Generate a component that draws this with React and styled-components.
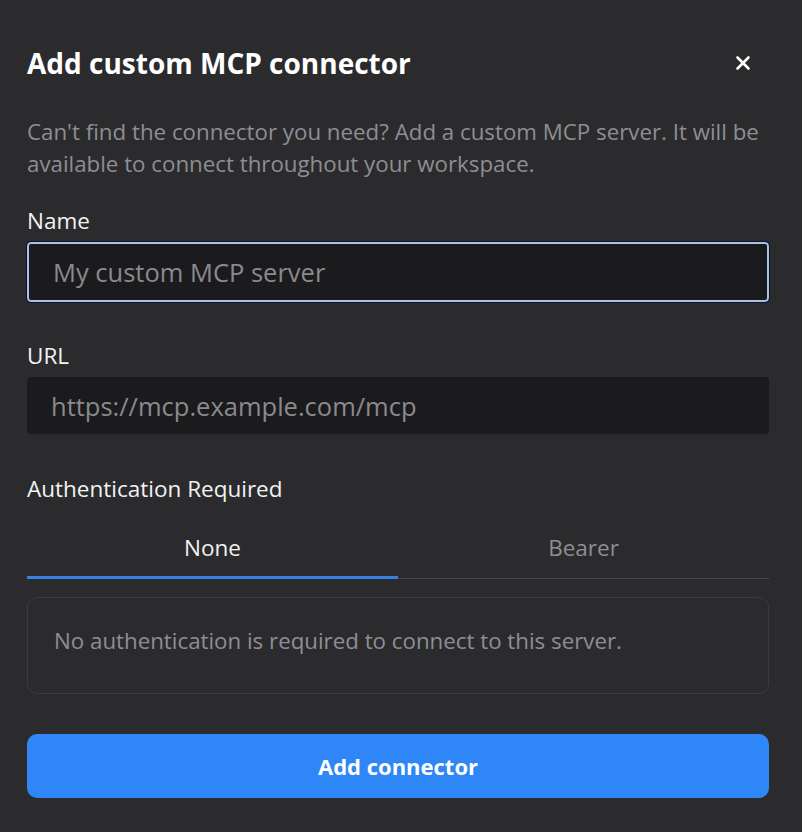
import React, { useState } from 'react';
import styled, { createGlobalStyle } from 'styled-components';

const GlobalStyle = createGlobalStyle`
  html, body {
    margin: 0;
    padding: 0;
    background: #2b2b2e;
  }
  body {
    font-family: "Open Sans", "Noto Sans", sans-serif;
    -webkit-font-smoothing: antialiased;
  }
  * { box-sizing: border-box; }
`;

const Dialog = styled.div`
  width: 802px;
  min-height: 832px;
  padding: 44px 33px 34px 27px;
  background: #2b2b2e;
  display: flex;
  flex-direction: column;
`;

const Header = styled.div`
  display: flex;
  align-items: center;
  justify-content: space-between;
  height: 38px;
`;

const Title = styled.h2`
  margin: 0;
  font-size: 28px;
  line-height: 38px;
  font-weight: 700;
  color: #ffffff;
`;

const CloseButton = styled.button`
  width: 32px;
  height: 32px;
  margin-right: 10px;
  padding: 0;
  border: none;
  background: transparent;
  color: #ffffff;
  display: flex;
  align-items: center;
  justify-content: center;
  cursor: pointer;
`;

const Description = styled.p`
  margin: 34px 0 0;
  font-size: 22.3px;
  line-height: 32px;
  color: #8e8e93;
`;

const Field = styled.div`
  display: flex;
  flex-direction: column;
  margin-top: ${props => props.gap || 0}px;
`;

const Label = styled.label`
  font-size: 22.5px;
  line-height: 28px;
  color: #f2f2f2;
  margin-bottom: ${props => props.space ?? 7}px;
`;

const Input = styled.input`
  width: 100%;
  height: ${props => props.focused ? 60 : 57}px;
  padding: 0 24px;
  font-family: inherit;
  font-size: 25.5px;
  color: #e6e6e6;
  background: #1b1b1d;
  border: ${props => props.focused ? '2px solid #a3c2f2' : 'none'};
  outline: ${props => props.focused ? '1px solid #141416' : 'none'};
  border-radius: 4px;

  &::placeholder {
    color: #8a8a8e;
  }
`;

const Tabs = styled.div`
  display: flex;
  height: 76px;
  border-bottom: 1px solid #48484c;
`;

const Tab = styled.button`
  flex: 1;
  height: 76px;
  padding: 17px 0 0;
  margin-bottom: -1px;
  font-family: inherit;
  font-size: 22.5px;
  line-height: 30px;
  background: transparent;
  border: none;
  border-bottom: 3px solid ${props => props.active ? '#3c7fe2' : 'transparent'};
  color: ${props => props.active ? '#f2f2f2' : '#8e8e93'};
  cursor: pointer;
`;

const InfoBox = styled.div`
  margin-top: 18px;
  height: 97px;
  padding: 28px 26px;
  border: 1px solid #3b3b3f;
  border-radius: 10px;
  font-size: 22.3px;
  line-height: 30px;
  color: #8e8e93;
`;

const SubmitButton = styled.button`
  margin-top: 40px;
  height: 64px;
  width: 100%;
  border: none;
  border-radius: 10px;
  background: #2e86f7;
  color: #ffffff;
  font-family: inherit;
  font-size: 22px;
  font-weight: 700;
  cursor: pointer;
`;

const App = () => {
  const [auth, setAuth] = useState('none');

  return (
    <>
      <GlobalStyle />
      <Dialog>
        <Header>
          <Title>Add custom MCP connector</Title>
          <CloseButton aria-label="Close">
            <svg width="16" height="16" viewBox="0 0 16 16" fill="none" stroke="currentColor" strokeWidth="2.6" strokeLinecap="round">
              <path d="M2.5 2.5l11 11M13.5 2.5l-11 11" />
            </svg>
          </CloseButton>
        </Header>

        <Description>
          Can't find the connector you need? Add a custom MCP server. It will be available to connect throughout your workspace.
        </Description>

        <Field gap={27}>
          <Label>Name</Label>
          <Input focused placeholder="My custom MCP server" />
        </Field>

        <Field gap={40}>
          <Label>URL</Label>
          <Input placeholder="https://mcp.example.com/mcp" />
        </Field>

        <Field gap={41}>
          <Label space={0}>Authentication Required</Label>
          <Tabs>
            <Tab active={auth === 'none'} onClick={() => setAuth('none')}>None</Tab>
            <Tab active={auth === 'bearer'} onClick={() => setAuth('bearer')}>Bearer</Tab>
          </Tabs>
        </Field>

        <InfoBox>No authentication is required to connect to this server.</InfoBox>

        <SubmitButton>Add connector</SubmitButton>
      </Dialog>
    </>
  );
};

export default App;
